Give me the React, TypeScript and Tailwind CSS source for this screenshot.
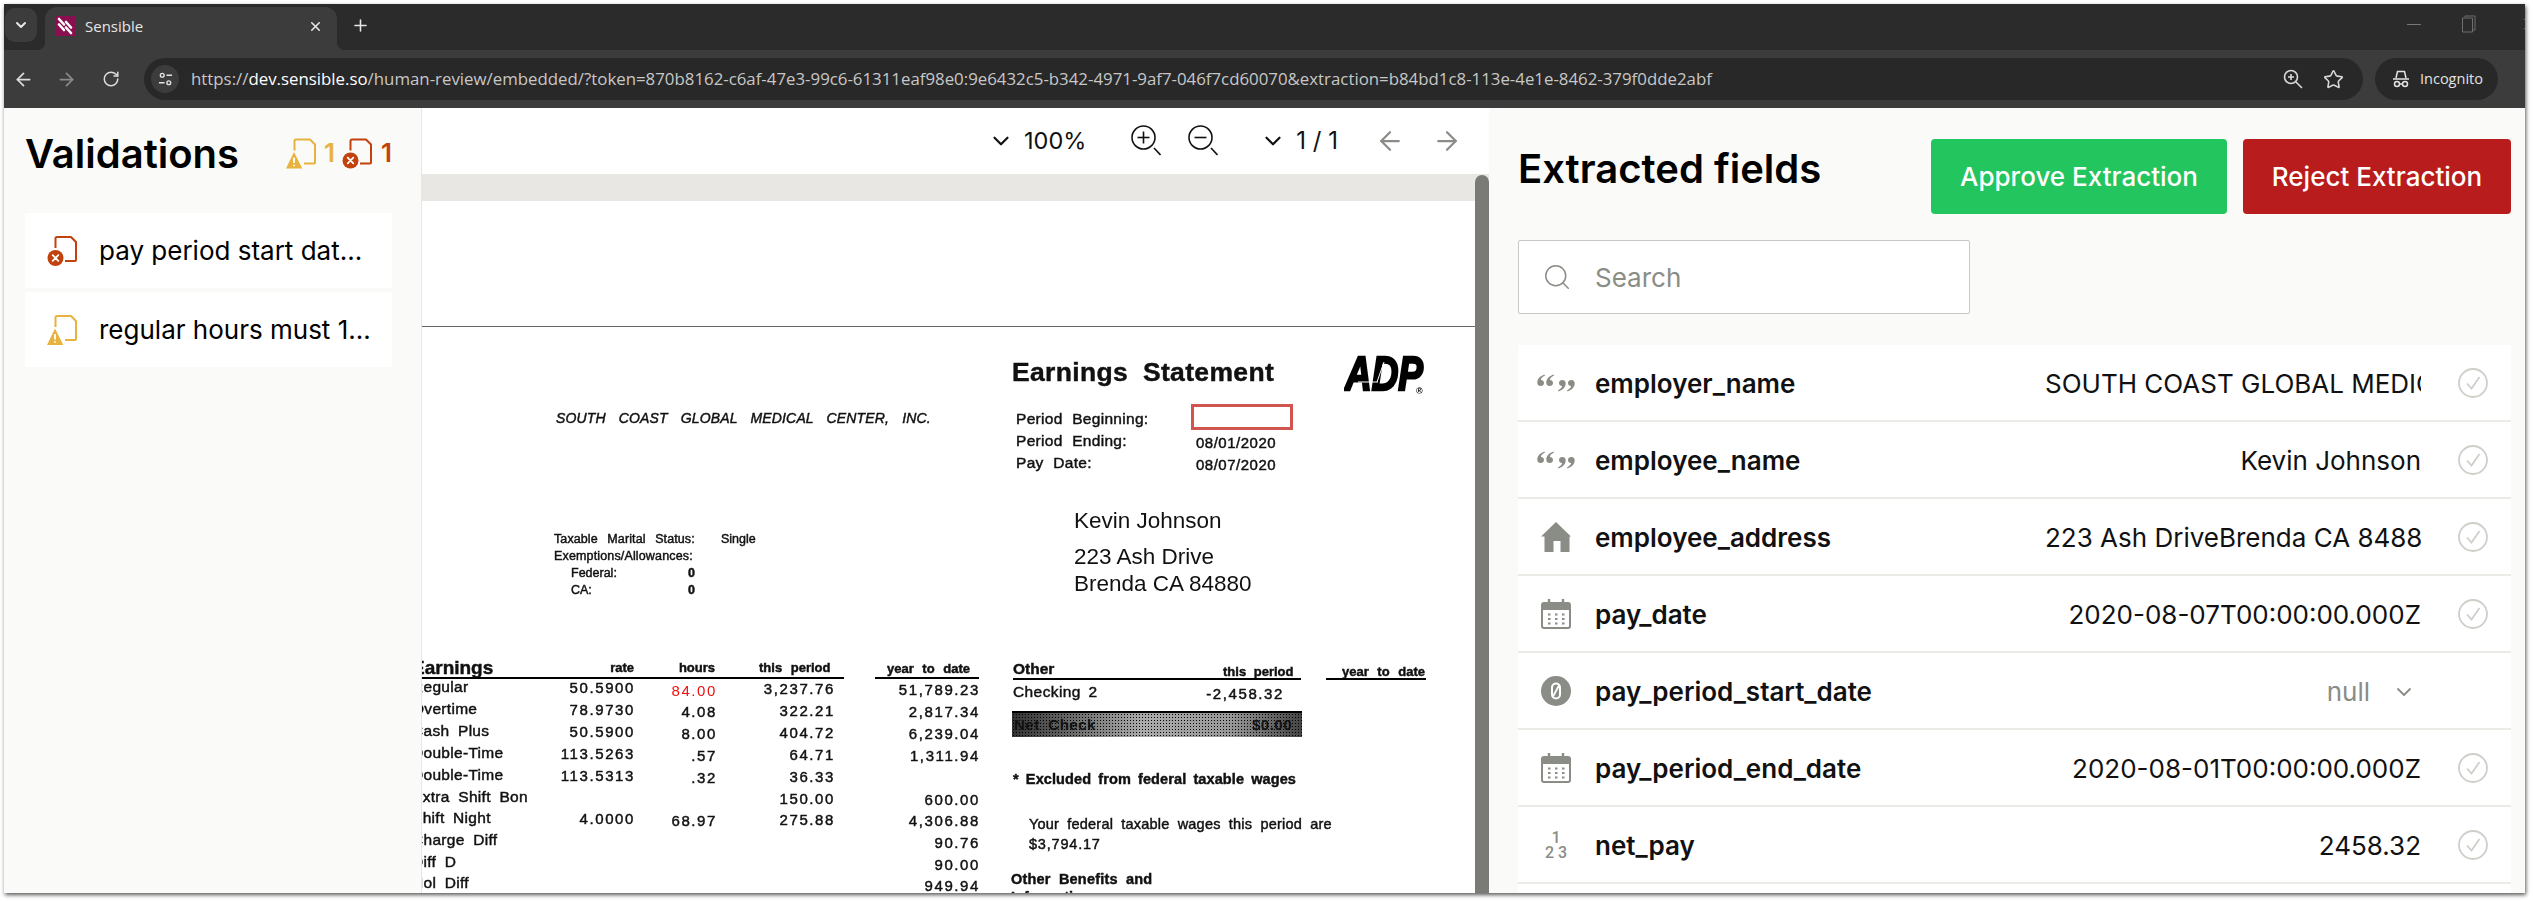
import { ArrowLeft, ArrowRight, ChevronDown, Plus, RotateCw, Search, Star, X } from "lucide-react";

const PAGE_X = 422;
const PAGE_Y = 201;

type DocLine = {
  text: string;
  x: number;
  y: number;
  right?: boolean;
  size?: number;
  track?: number;
  words?: number;
  bold?: boolean;
  italic?: boolean;
  red?: boolean;
  clean?: boolean;
};

const earnings: [string, string, string, string, string, number][] = [
  ["Regular", "50.5900", "", "3,237.76", "51,789.23", 687],
  ["Overtime", "78.9730", "4.08", "322.21", "2,817.34", 709],
  ["Cash Plus", "50.5900", "8.00", "404.72", "6,239.04", 731],
  ["Double-Time", "113.5263", ".57", "64.71", "1,311.94", 753],
  ["Double-Time", "113.5313", ".32", "36.33", "", 775],
  ["Extra Shift Bon", "", "", "150.00", "600.00", 797],
  ["Shift Night", "4.0000", "68.97", "275.88", "4,306.88", 818],
  ["Charge Diff", "", "", "", "90.76", 840],
  ["Diff D", "", "", "", "90.00", 862],
  ["Hol Diff", "", "", "", "949.94", 883],
];

const docLines: DocLine[] = [
  { text: "SOUTH COAST GLOBAL MEDICAL CENTER, INC.", x: 556, y: 418, size: 14, italic: true, words: 9, track: 0.15 },
  { text: "Taxable Marital Status:", x: 554, y: 539, size: 12.5, words: 6, track: 0.1 },
  { text: "Single", x: 721, y: 539, size: 12.5 },
  { text: "Exemptions/Allowances:", x: 554, y: 556, size: 12.5, track: 0.15 },
  { text: "Federal:", x: 571, y: 573, size: 12.5 },
  { text: "0", x: 688, y: 573, size: 12.5, bold: true },
  { text: "CA:", x: 571, y: 590, size: 12.5 },
  { text: "0", x: 688, y: 590, size: 12.5, bold: true },
  { text: "Earnings Statement", x: 1012, y: 372, size: 26.5, bold: true, words: 7, track: 0.35 },
  { text: "Period Beginning:", x: 1016, y: 419, size: 15.5, words: 5, track: 0.3 },
  { text: "Period Ending:", x: 1016, y: 441, size: 15.5, words: 5, track: 0.3 },
  { text: "Pay Date:", x: 1016, y: 463, size: 15.5, words: 5, track: 0.3 },
  { text: "08/01/2020", x: 1196, y: 442, size: 15, track: 0.5 },
  { text: "08/07/2020", x: 1196, y: 464, size: 15, track: 0.5 },
  { text: "Kevin Johnson", x: 1074, y: 521, size: 22.5, clean: true },
  { text: "223 Ash Drive", x: 1074, y: 557, size: 22.5, clean: true },
  { text: "Brenda CA 84880", x: 1074, y: 584, size: 22.5, clean: true },
  { text: "Earnings", x: 412, y: 667, size: 19, bold: true },
  { text: "rate", x: 634, y: 667, size: 13, bold: true, right: true },
  { text: "hours", x: 715, y: 667, size: 13, bold: true, right: true },
  { text: "this period", x: 759, y: 667, size: 13, bold: true, words: 5 },
  { text: "year to date", x: 887, y: 668, size: 13, bold: true, words: 5 },
  { text: "84.00", x: 717, y: 690, size: 15, track: 1.6, right: true, red: true },
  { text: "Other", x: 1013, y: 669, size: 15.5, bold: true },
  { text: "this period", x: 1223, y: 671, size: 13, bold: true, words: 4 },
  { text: "year to date", x: 1342, y: 671, size: 13, bold: true, words: 5 },
  { text: "Checking 2", x: 1013, y: 692, size: 15.5, track: 0.4, words: 3 },
  { text: "-2,458.32", x: 1284, y: 693, size: 15, track: 1.6, right: true },
  { text: "* Excluded from federal taxable wages", x: 1013, y: 779, size: 14.5, bold: true, words: 3, track: 0.1 },
  { text: "Your federal taxable wages this period are", x: 1029, y: 824, size: 14.5, words: 4, track: 0.2 },
  { text: "$3,794.17", x: 1029, y: 844, size: 14.5, track: 0.8 },
  { text: "Other Benefits and", x: 1011, y: 879, size: 14.5, bold: true, words: 4, track: 0.2 },
  { text: "Information", x: 1011, y: 897, size: 14.5, bold: true },
];

for (const [label, rate, hours, period, ytd, y] of earnings) {
  docLines.push({ text: label, x: 412, y, size: 15.5, track: 0.3, words: 4 });
  if (rate) docLines.push({ text: rate, x: 635, y, size: 15, track: 1.6, right: true });
  if (hours) docLines.push({ text: hours, x: 717, y: y + 2, size: 15, track: 1.6, right: true });
  if (period) docLines.push({ text: period, x: 835, y: y + 1, size: 15, track: 1.6, right: true });
  if (ytd) docLines.push({ text: ytd, x: 980, y: y + 2, size: 15, track: 1.6, right: true });
}

const fields = [
  { icon: "quote", name: "employer_name", value: "SOUTH COAST GLOBAL MEDICAL CENTER, INC." },
  { icon: "quote", name: "employee_name", value: "Kevin Johnson" },
  { icon: "home", name: "employee_address", value: "223 Ash DriveBrenda CA 84880" },
  { icon: "date", name: "pay_date", value: "2020-08-07T00:00:00.000Z" },
  { icon: "null", name: "pay_period_start_date", value: null },
  { icon: "date", name: "pay_period_end_date", value: "2020-08-01T00:00:00.000Z" },
  { icon: "number", name: "net_pay", value: "2458.32" },
];

const QUOTE_MARK = "M7.500 .5C3 2 .3 5 .3 8.700.3 10.800 1.800 12 3.700 12 5.600 12 7 10.700 7 8.900 7 7.100 5.700 5.900 3.900 5.900 4.100 4.200 5.400 2.800 8 1.600Z";

function DocIcon({ kind, className }: { kind: "warn" | "error"; className: string }) {
  return (
    <svg viewBox="0 0 30 30" className={className} fill="none">
      <path d="M8.500 12V2.500A1.500 1.500 0 0 1 10 1h14l5 5v18a1 1 0 0 1-1 1H18" stroke="currentColor" strokeWidth="2" strokeLinejoin="round" />
      {kind === "warn" ? (
        <>
          <path d="M8 13.500 16.300 30H0Z" fill="currentColor" />
          <path d="M8 19v5.500M8 26.200v1.600" stroke="#fff" strokeWidth="1.800" />
        </>
      ) : (
        <>
          <circle cx="8.500" cy="22" r="8" fill="currentColor" />
          <path d="m5.700 19.200 5.600 5.600m0-5.600-5.600 5.600" stroke="#fff" strokeWidth="1.800" strokeLinecap="round" />
        </>
      )}
    </svg>
  );
}

function FieldIcon({ kind }: { kind: string }) {
  if (kind === "quote") {
    return (
      <svg viewBox="0 0 38 18" className="h-[18px] w-[38px] text-[#8a8c86]" fill="currentColor">
        <path d={QUOTE_MARK} />
        <path d={QUOTE_MARK} transform="translate(9 0)" />
        <path d={QUOTE_MARK} transform="translate(29 18) rotate(180)" />
        <path d={QUOTE_MARK} transform="translate(38 18) rotate(180)" />
      </svg>
    );
  }
  if (kind === "home") {
    return (
      <svg viewBox="0 0 30 30" className="h-[30px] w-[30px] text-[#8a8c86]" fill="currentColor">
        <path d="M15 0 30 14.500h-1.500V30h-9V19h-7v11h-9V14.500H0Z" />
      </svg>
    );
  }
  if (kind === "date") {
    return (
      <svg viewBox="0 0 30 30" className="h-[30px] w-[30px] text-[#8a8c86]" fill="none">
        <rect x="1" y="4" width="28" height="25" rx="2" stroke="currentColor" strokeWidth="2" />
        <path d="M1 4h28v7H1Z" fill="currentColor" />
        <path d="M8 0v7M22 0v7" stroke="currentColor" strokeWidth="2.400" />
        <path d="M7 15.500h2.500M14 15.500h2.500M21 15.500h2.500M7 20h2.500M14 20h2.500M21 20h2.500M7 24.500h2.500M14 24.500h2.500M21 24.500h2.500" stroke="currentColor" strokeWidth="2" />
      </svg>
    );
  }
  if (kind === "null") {
    return (
      <svg viewBox="0 0 30 30" className="h-[30px] w-[30px] text-[#8a8c86]" fill="none">
        <circle cx="15" cy="15" r="15" fill="currentColor" />
        <rect x="11" y="7.500" width="8" height="15" rx="4" stroke="#fff" strokeWidth="2" />
        <path d="m18.500 8.500-7 13" stroke="#fff" strokeWidth="1.800" />
      </svg>
    );
  }
  return (
    <div className="flex w-[30px] flex-col items-center text-[16px] leading-[15px] font-medium text-[#8a8c86] [font-family:'Roboto',sans-serif]">
      <span>1</span>
      <span className="pl-[4px] tracking-[4px]">23</span>
    </div>
  );
}

function CheckCircle() {
  return (
    <svg viewBox="0 0 30 30" className="h-[30px] w-[30px] text-[#cfcfca]" fill="none" stroke="currentColor">
      <circle cx="15" cy="15" r="14" strokeWidth="1.800" />
      <path d="m9 15.500 4.500 5L21.500 9" strokeWidth="1.800" />
    </svg>
  );
}

function MagnifierIcon({ plus }: { plus?: boolean }) {
  return (
    <svg viewBox="0 0 30 32" className="h-[32px] w-[30px] text-[#111]" fill="none" stroke="currentColor" strokeWidth="1.600">
      <circle cx="12.500" cy="12.500" r="11.500" />
      <path d="M6.500 12.500h12" />
      {plus && <path d="M12.500 6.500v12" />}
      <path d="m23 23 6.500 7" />
    </svg>
  );
}

function TabStrip() {
  return (
    <div className="relative flex h-[46px] items-end bg-[#2b2b2b] text-[#e6e6e6]">
      <div className="mb-[8px] ml-[1px] flex h-[34px] w-[32px] items-center justify-center rounded-[10px] bg-[#3c3c3c]">
        <ChevronDown size={16} strokeWidth={3} />
      </div>
      <div className="relative ml-[8px] flex h-[43px] w-[292px] items-center rounded-t-[12px] bg-[#3c3c3c] pb-[5px] pl-[10px]">
        <div className="absolute bottom-0 left-[-8px] h-[8px] w-[8px] bg-[radial-gradient(circle_at_0_0,transparent_8px,#3c3c3c_8.500px)]" />
        <div className="absolute right-[-8px] bottom-0 h-[8px] w-[8px] bg-[radial-gradient(circle_at_100%_0,transparent_8px,#3c3c3c_8.500px)]" />
        <svg viewBox="0 0 20 20" className="h-[20px] w-[20px]">
          <rect width="20" height="20" fill="#8a0f50" />
          <path d="M4 3 9 8.500M4 8.500 9 14M11 6l5 5.500M11 11.500l5 5.500" stroke="#fff" strokeWidth="2.600" strokeLinecap="round" />
        </svg>
        <span className="ml-[10px] flex-1 text-[15px] [font-family:'Open_Sans',sans-serif]">Sensible</span>
        <X size={15} strokeWidth={2.500} className="mr-[14px]" />
      </div>
      <Plus size={19} strokeWidth={2} className="mb-[15px] ml-[14px]" />
      <div className="absolute top-0 right-0 flex h-[40px] items-center">
        <div className="mr-[41px] h-[1px] w-[14px] bg-[#777]" />
        <svg viewBox="0 0 14 18" className="mr-[43px] h-[18px] w-[14px]" fill="none" stroke="#6f6f6f" strokeWidth="1">
          <path d="M3 2V1h10v14h-2M.500 3h10v14H.500Z" />
        </svg>
        <X size={20} strokeWidth={1} className="mr-[-14px] text-[#777]" />
      </div>
    </div>
  );
}

function Toolbar() {
  return (
    <div className="flex h-[58px] items-center bg-[#3c3c3c] text-[#d0d0d0]">
      <ArrowLeft size={21} strokeWidth={2} className="ml-[9px] text-[#dcdcdc]" />
      <ArrowRight size={21} strokeWidth={2} className="ml-[22px] text-[#8a8a8a]" />
      <RotateCw size={18} strokeWidth={2} className="ml-[25px] text-[#dcdcdc]" />
      <div className="ml-[24px] flex h-[42px] w-[2219px] items-center rounded-full bg-[#282828]">
        <div className="ml-[7px] flex h-[28px] w-[28px] items-center justify-center rounded-full bg-[#3c3c3c]">
          <svg viewBox="0 0 16 16" className="h-[15px] w-[15px]" fill="none" stroke="#e3e3e3" strokeWidth="1.500">
            <circle cx="4.500" cy="3.500" r="2" />
            <path d="M9 3.500h6M1 11.500h6" />
            <circle cx="11.500" cy="11.500" r="2" />
          </svg>
        </div>
        <div className="ml-[12px] flex-1 text-[16.830px] whitespace-nowrap text-[#c7c7c7] [font-family:'Open_Sans',sans-serif]">
          https://<span className="text-white">dev.sensible.so</span>
          /human-review/embedded/?token=870b8162-c6af-47e3-99c6-61311eaf98e0:9e6432c5-b342-4971-9af7-046f7cd60070&amp;extraction=b84bd1c8-113e-4e1e-8462-379f0dde2abf
        </div>
        <svg viewBox="0 0 20 20" className="mr-[20px] h-[20px] w-[20px]" fill="none" stroke="#d8d8d8" strokeWidth="1.600">
          <circle cx="8" cy="8" r="6.500" />
          <path d="m13 13 6 6M5 8h6M8 5v6" />
        </svg>
        <Star size={21} strokeWidth={1.800} className="mr-[19px] text-[#d8d8d8]" />
      </div>
      <div className="ml-[12px] flex h-[42px] w-[123px] items-center rounded-full bg-[#282828]">
        <svg viewBox="0 0 18 18" className="ml-[17px] h-[18px] w-[18px]" fill="none" stroke="#e3e3e3" strokeWidth="1.500">
          <path d="M4 8 5.500 1.500h7L14 8M1 9h16" />
          <circle cx="5" cy="14" r="2.500" />
          <circle cx="13" cy="14" r="2.500" />
          <path d="M7.500 14h3" />
        </svg>
        <span className="ml-[10px] text-[14.500px] text-[#e3e3e3] [font-family:'Open_Sans',sans-serif]">Incognito</span>
      </div>
    </div>
  );
}

function Validations() {
  return (
    <aside className="flex w-[418px] shrink-0 flex-col border-r border-[#e8e7e3] bg-[#fafaf8] pt-[26px] pr-[29px] pl-[21px]">
      <div className="flex h-[38px] items-center">
        <h1 className="flex-1 pt-[2px] text-[40px] leading-none font-semibold text-black">Validations</h1>
        <DocIcon kind="warn" className="h-[31px] w-[30px] text-[#e8b23f]" />
        <span className="ml-[8px] w-[11px] text-[26px] leading-none font-semibold text-[#e8b23f]">1</span>
        <DocIcon kind="error" className="ml-[7px] h-[31px] w-[30px] text-[#c2410c]" />
        <span className="mr-[2px] ml-[9px] w-[9px] text-[26px] leading-none font-semibold text-[#c2410c]">1</span>
      </div>
      <div className="mt-[41px] flex flex-col gap-[4px]">
        <div className="flex h-[75px] items-center bg-white pl-[22px]">
          <DocIcon kind="error" className="h-[30px] w-[30px] text-[#c2410c]" />
          <span className="ml-[22px] text-[26px] text-black">pay period start dat...</span>
        </div>
        <div className="flex h-[75px] items-center bg-white pl-[22px]">
          <DocIcon kind="warn" className="h-[30px] w-[30px] text-[#e8b23f]" />
          <span className="ml-[22px] text-[26px] text-black">regular hours must 1...</span>
        </div>
      </div>
    </aside>
  );
}

function ScanLine({ line }: { line: DocLine }) {
  return (
    <span
      className={`absolute leading-none whitespace-nowrap ${line.bold ? "font-bold" : ""} ${line.italic ? "italic" : ""} ${line.red ? "text-[#f01010]" : "text-[#111]"} ${line.clean || line.red ? "" : "[-webkit-text-stroke:0.45px_#111]"}`}
      style={{
        left: line.x - PAGE_X,
        top: line.y - PAGE_Y,
        fontSize: line.size,
        letterSpacing: line.track,
        wordSpacing: line.words,
        transform: `translate(${line.right ? "-100%" : "0"}, -50%)`,
      }}
    >
      {line.text}
    </span>
  );
}

function PdfViewer() {
  return (
    <main className="relative flex w-[1067px] shrink-0 flex-col bg-white">
      <div className="flex h-[66px] items-center pl-[566px] text-[#111]">
        <ChevronDown size={26} strokeWidth={2} />
        <span className="ml-[10px] text-[23.500px]">100%</span>
        <div className="ml-[45px]">
          <MagnifierIcon plus />
        </div>
        <div className="ml-[27px]">
          <MagnifierIcon />
        </div>
        <ChevronDown size={26} strokeWidth={2} className="ml-[42px]" />
        <span className="ml-[10px] text-[24px]">1 / 1</span>
        <ArrowLeft size={30} strokeWidth={1.800} className="ml-[37px] text-[#8a8c86]" />
        <ArrowRight size={30} strokeWidth={1.800} className="ml-[27px] text-[#8a8c86]" />
      </div>
      <div className="h-[27px] bg-[#e8e7e3]" />
      <div className="relative flex-1 overflow-hidden font-['Liberation_Sans',sans-serif] blur-[0.4px]">
        <div className="absolute top-[125px] left-0 h-[1px] w-full bg-[#666]" />
        {docLines.map((line, i) => (
          <ScanLine key={i} line={line} />
        ))}
        <div className="absolute top-[203px] left-[769px] h-[26px] w-[102px] border-[3px] border-[#d0544f]" />
        <svg viewBox="0 0 81 40" className="absolute top-[153px] left-[922px] h-[40px] w-[81px]">
          <text x="1" y="36" fontFamily="Liberation Sans" fontWeight="700" fontStyle="italic" fontSize="48" fill="#000" stroke="#000" strokeWidth="2.500" textLength="78" lengthAdjust="spacingAndGlyphs">ADP</text>
          <path d="M14 28h20M40 8 33 28" stroke="#fff" strokeWidth="1" />
          <text x="72" y="40" fontFamily="Liberation Sans" fontWeight="700" fontSize="9" fill="#000">®</text>
        </svg>
        <div className="absolute top-[476px] left-0 h-[2px] w-[422px] bg-black" />
        <div className="absolute top-[476px] left-[453px] h-[2px] w-[104px] bg-black" />
        <div className="absolute top-[477px] left-[591px] h-[2px] w-[288px] bg-black" />
        <div className="absolute top-[477px] left-[904px] h-[2px] w-[100px] bg-black" />
        <div className="absolute top-[510px] left-[590px] flex h-[26px] w-[290px] items-center justify-between border-t-2 border-black bg-[radial-gradient(#000_0.800px,transparent_1px),linear-gradient(90deg,#333,#aaa_45%,#999_75%,#444)] bg-[length:3px_3px,100%_100%] px-[2px] text-[15px] font-bold tracking-[0.5px] text-[#111] [word-spacing:4px]">
          <span>Net Check</span>
          <span className="pr-[8px]">$0.00</span>
        </div>
      </div>
      <div className="absolute top-[67px] right-0 bottom-0 w-[14px] rounded-t-[7px] bg-[#7a7a76]" />
    </main>
  );
}

function FieldsPanel() {
  return (
    <section className="flex min-w-0 flex-1 flex-col overflow-hidden bg-[#fafaf8] pr-[14px] pl-[29px]">
      <div className="flex items-start pt-[31px]">
        <h2 className="flex-1 pt-[3px] text-[40px] leading-[54px] font-semibold text-black">Extracted fields</h2>
        <button className="h-[75px] w-[296px] rounded-[4px] bg-[#22c55e] text-[26px] font-medium text-white">Approve Extraction</button>
        <button className="ml-[16px] h-[75px] w-[268px] rounded-[4px] bg-[#b91c1c] text-[26px] font-medium text-white">Reject Extraction</button>
      </div>
      <div className="mt-[26px] flex h-[74px] w-[452px] items-center rounded-[2px] border border-[#c8c8c4] bg-white pl-[23px]">
        <Search size={30} strokeWidth={1.200} className="text-[#8a8c86]" />
        <span className="ml-[23px] text-[26px] text-[#8a8c86]">Search</span>
      </div>
      <div className="mt-[31px] flex-1 bg-white">
        {fields.map((field) => (
          <div key={field.name} className="flex h-[77px] items-center border-b-2 border-[#ecebe7] pl-[19px]">
            <div className="flex w-[38px] shrink-0 justify-center">
              <FieldIcon kind={field.icon} />
            </div>
            <span className="ml-[20px] flex-1 pt-[2px] text-[26px] font-semibold text-[#111]">{field.name}</span>
            {field.value ? (
              <>
                <div className="w-[376px] overflow-hidden pt-[2px] text-right text-[26px] whitespace-nowrap text-[#111]">{field.value}</div>
                <div className="mr-[23px] ml-[37px]">
                  <CheckCircle />
                </div>
              </>
            ) : (
              <div className="mr-[90px] flex w-[376px] items-center justify-end pt-[2px] pr-[5px] text-[#8a8c86]">
                <span className="text-[26px]">null</span>
                <ChevronDown size={24} strokeWidth={1.800} className="ml-[22px]" />
              </div>
            )}
          </div>
        ))}
      </div>
    </section>
  );
}

export default function App() {
  return (
    <div className="h-[901px] w-[2533px] overflow-hidden bg-white pt-[4px] pr-[8px] pb-[8px] pl-[4px] [font-family:'Inter',sans-serif]">
      <div className="flex h-full flex-col overflow-hidden shadow-[1px_2px_4px_rgba(0,0,0,0.65)]">
        <TabStrip />
        <Toolbar />
        <div className="flex min-h-0 flex-1">
          <Validations />
          <PdfViewer />
          <FieldsPanel />
        </div>
      </div>
    </div>
  );
}
